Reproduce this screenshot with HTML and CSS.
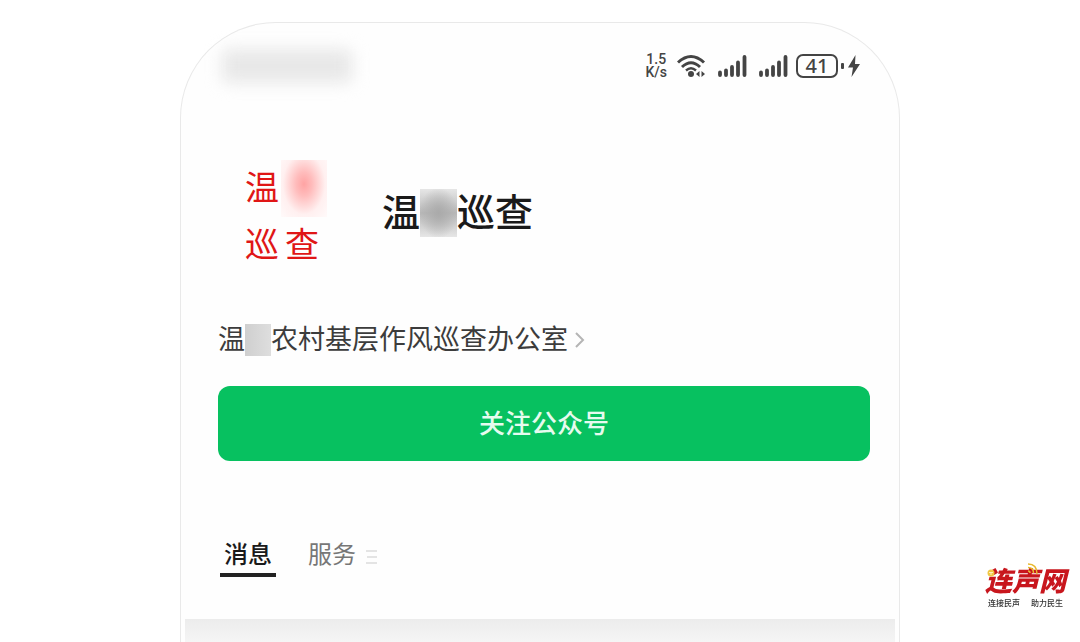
FILE: index.html
```html
<!DOCTYPE html>
<html lang="zh-CN">

<head>
    <meta charset="UTF-8">
    <meta name="viewport" content="width=device-width, initial-scale=1.0">
    <title>公众号</title>
    <link rel="stylesheet" href="styles.css">
</head>

<body>
    <main class="phone">
        <!-- 状态栏 -->
        <div class="status-bar">
            <span class="status-mask"></span>
            <div class="status-icons">
                <div class="speed">1.5<br>K/s</div>
                <svg class="wifi" width="29" height="24" viewBox="0 0 29 24" fill="none" stroke="#444" stroke-width="3">
                    <path d="M1 8.500Q14 -3.500 27 8.500" />
                    <path d="M5 13Q14 4.500 23 13" />
                    <path d="M9 16.500Q14 12 19 16.500" stroke-width="2.400" />
                    <circle cx="14" cy="20" r="3" fill="#444" stroke="none" />
                    <path d="M19 20l3.500-3v6zM28 20l-3.500-3v6z" fill="#444" stroke="none" />
                </svg>
                <svg class="signal" width="29" height="22" viewBox="0 0 29 22" stroke="#444" stroke-width="3.800" stroke-linecap="round">
                    <path d="M2 17.500v2.500M8 15.500v4.500M14 12v8M20 7.500v12.500M26.500 2v18" />
                </svg>
                <svg class="signal" width="29" height="22" viewBox="0 0 29 22" stroke="#444" stroke-width="3.800" stroke-linecap="round">
                    <path d="M2 17.500v2.500M8 15.500v4.500M14 12v8M20 7.500v12.500M26.500 2v18" />
                </svg>
                <div class="battery">41</div>
                <svg class="bolt" width="20" height="24" viewBox="0 0 20 24" fill="#444">
                    <rect x="0" y="9" width="3" height="6" rx="1" />
                    <path d="M14.500 1L7 13.500h5L10.500 23 19 10h-5z" />
                </svg>
            </div>
        </div>

        <!-- 账号信息 -->
        <header class="profile">
            <div class="avatar">
                <span>温</span>
                <span class="avatar-mask"></span>
                <span>巡</span>
                <span class="avatar-last">查</span>
            </div>
            <h1 class="name">温<span class="name-mask"></span>巡查</h1>
        </header>

        <a class="owner" href="#">
            <span class="owner-text">温<span class="owner-mask"></span>农村基层作风巡查办公室</span>
            <svg width="12" height="20" viewBox="0 0 12 20" fill="none" stroke="#b5b5b5" stroke-width="2">
                <path d="M2 3l7 7-7 7" />
            </svg>
        </a>

        <button class="follow" type="button">关注公众号</button>

        <!-- 标签 -->
        <nav class="tabs">
            <a class="tab active" href="#">消息</a>
            <a class="tab" href="#">服务</a>
            <svg class="menu" width="12" height="14" viewBox="0 0 12 14" stroke="#e4e4e4" stroke-width="2">
                <path d="M0 1h11M1 7h10M0 13h11" />
            </svg>
        </nav>

        <div class="content"></div>
    </main>

    <!-- 角标 -->
    <div class="brand">
        <div class="brand-name">连声网</div>
        <div class="brand-slogan"><span>连接民声</span><span>助力民生</span></div>
        <svg class="brand-wave" width="12" height="12" viewBox="0 0 12 12" fill="none" stroke="#e8b92e" stroke-width="1.500">
            <path d="M1 1q9 0 9 10M1 4.500q5.500 0 5.500 5.500M1 8q2 0 2 2" />
        </svg>
        <svg class="brand-dot" width="8" height="8" viewBox="0 0 8 8">
            <circle cx="4" cy="4" r="3.500" fill="#f0c744" />
            <path d="M2 3.500h4M4 3.500V6" stroke="#fff2bd" />
        </svg>
    </div>
</body>

</html>
```
FILE: styles.css
```css
* {
    box-sizing: border-box;
}

body {
    margin: 0;
    min-height: 100vh;
    display: flex;
    background-color: #ffffff;
    font-family: "Liberation Sans", "Noto Sans CJK SC", sans-serif;
}

a {
    color: inherit;
    text-decoration: none;
}

.phone {
    flex: 1;
    display: flex;
    flex-direction: column;
    margin: 22px 180px 0;
    padding: 18px 4px 0;
    border: 1px solid #e9e9e9;
    border-bottom: none;
    border-radius: 96px 96px 0 0;
    background-color: #fefefe;
}

.status-bar {
    display: flex;
    justify-content: space-between;
    align-items: center;
    height: 50px;
    padding: 0 34px 0 37px;
}

.status-mask {
    width: 130px;
    height: 34px;
    border-radius: 6px;
    background-color: #e8e8e8;
    filter: blur(8px);
}

.status-icons {
    display: flex;
    align-items: center;
    color: #444444;
}

.speed {
    font-family: Roboto, sans-serif;
    font-size: 14px;
    font-weight: 500;
    line-height: 13px;
    text-align: center;
}

.wifi {
    margin-left: 10px;
}

.signal {
    margin-left: 12px;
}

.battery {
    width: 42px;
    height: 24px;
    margin: 0 3px 0 8px;
    border: 2px solid #444444;
    border-radius: 7px;
    font-family: "Noto Sans", sans-serif;
    font-size: 20px;
    font-weight: 500;
    line-height: 20px;
    text-align: center;
}

.profile {
    display: flex;
    align-items: flex-start;
    gap: 55px;
    height: 110px;
    margin-top: 69px;
    padding-left: 60px;
}

.avatar {
    display: grid;
    grid-template-columns: 36px 46px;
    grid-template-rows: 57px 57px;
    color: #e01616;
    font-size: 34px;
    line-height: 56px;
}

.avatar-mask {
    background: radial-gradient(ellipse at 50% 42%, #ffa3a3, #ffbcbc 25%, #fff0f0 65%, #fffafa);
}

.avatar-last {
    padding-left: 4px;
}

.name {
    display: flex;
    align-items: center;
    margin: 25px 0 0;
    color: #1a1a1a;
    font-size: 38px;
    font-weight: 500;
    line-height: 56px;
}

.name-mask {
    width: 37px;
    height: 48px;
    background: radial-gradient(ellipse, #aaaaaa, rgba(170, 170, 170, 0) 75%), linear-gradient(#e6e6e6, #b8b8b8 50%, #e6e6e6);
}

.owner {
    display: flex;
    align-items: center;
    gap: 6px;
    margin: 52px 33px 0;
    color: #3c3c3c;
}

.owner-text {
    display: flex;
    align-items: center;
    font-size: 27px;
    line-height: 36px;
}

.owner-mask {
    width: 26px;
    height: 32px;
    background: linear-gradient(to right, #cfcfcf, #dedede);
}

.follow {
    height: 75px;
    margin: 28px 25px 0 33px;
    padding: 0 0 4px;
    border: none;
    border-radius: 12px;
    background-color: #07c160;
    color: #e6fbef;
    font-family: inherit;
    font-size: 26px;
    font-weight: 500;
    cursor: pointer;
}

.tabs {
    display: flex;
    align-items: center;
    gap: 28px;
    margin: 76px 35px 0;
    color: #777777;
}

.tab {
    padding: 0 4px;
    border-bottom: 4px solid transparent;
    font-size: 24px;
    line-height: 36px;
}

.tab.active {
    border-bottom-color: #222222;
    color: #1a1a1a;
    font-weight: 500;
}

.menu {
    margin-left: -22px;
}

.content {
    flex: 1;
    min-height: 23px;
    margin-top: 42px;
    background: linear-gradient(#ececec, #f5f5f5);
}

/* 固定在右下角 */
.brand {
    position: fixed;
    right: 14px;
    bottom: 32px;
}

.brand-name {
    color: #c8161d;
    font-size: 27px;
    font-style: italic;
    font-weight: 900;
    line-height: 32px;
}

.brand-slogan {
    display: flex;
    justify-content: space-between;
    padding: 0 3px;
    color: #333333;
    font-size: 8px;
    font-weight: 500;
    line-height: 12px;
}

.brand-wave {
    position: absolute;
    top: -3px;
    left: 42px;
}

.brand-dot {
    position: absolute;
    top: 3px;
    left: 2px;
}
```
